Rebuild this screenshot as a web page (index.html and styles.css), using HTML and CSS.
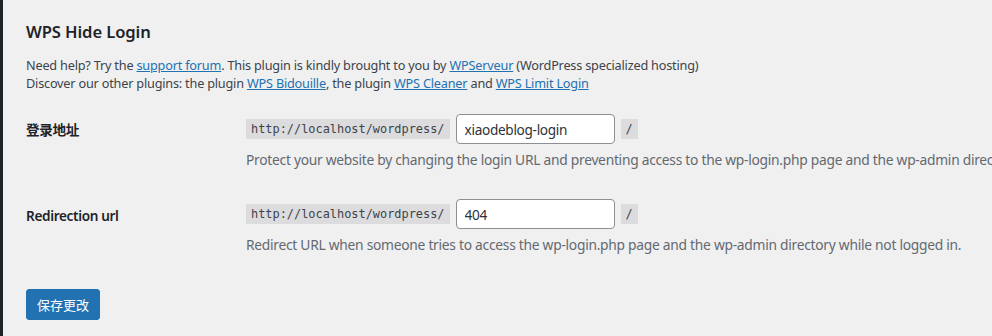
FILE: index.html
```html
<!DOCTYPE html>
<html lang="zh-CN">
<head>
<meta charset="utf-8">
<title>WPS Hide Login</title>
<link rel="stylesheet" href="styles.css">
</head>
<body>
<div class="sidebar"></div>
<main class="content">
  <h2 class="title">WPS Hide Login</h2>
  <p class="intro">Need help? Try the <a href="#">support forum</a>. This plugin is kindly brought to you by <a href="#">WPServeur</a> (WordPress specialized hosting)<br>Discover our other plugins: the plugin <a href="#">WPS Bidouille</a>, the plugin <a href="#">WPS Cleaner</a> and <a href="#">WPS Limit Login</a></p>
  <div class="form-table">
    <div class="row">
      <div class="label">登录地址</div>
      <div class="field">
        <div class="line">
          <code class="code">http://localhost/wordpress/</code>
          <input class="text" type="text" value="xiaodeblog-login">
          <code class="code">/</code>
        </div>
        <p class="desc">Protect your website by changing the login URL and preventing access to the wp-login.php page and the wp-admin directory to non-connected people.</p>
      </div>
    </div>
    <div class="row">
      <div class="label">Redirection url</div>
      <div class="field">
        <div class="line">
          <code class="code">http://localhost/wordpress/</code>
          <input class="text" type="text" value="404">
          <code class="code">/</code>
        </div>
        <p class="desc">Redirect URL when someone tries to access the wp-login.php page and the wp-admin directory while not logged in.</p>
      </div>
    </div>
  </div>
  <button class="button" type="button">保存更改</button>
</main>
</body>
</html>
```
FILE: styles.css
```css
html, body {
  margin: 0;
  height: 100%;
  overflow: hidden;
}
body {
  display: flex;
  background: #f0f0f1;
  color: #3c434a;
  font-family: "Noto Sans", "Noto Sans CJK SC", sans-serif;
  font-size: 12.7px;
  letter-spacing: -0.2px;
}
.sidebar {
  flex: none;
  width: 3px;
  background: #1d2327;
}
.content {
  flex: 1;
  min-width: 0;
  padding: 21px 0 0 23px;
  white-space: nowrap;
}
.title {
  margin: 0;
  font-size: 16.6px;
  line-height: 22px;
  font-weight: 600;
  color: #1d2327;
  letter-spacing: -0.1px;
}
.intro {
  margin: 13px 0 7px;
  line-height: 18px;
}
a {
  color: #2271b1;
  text-decoration: underline;
}
.row {
  display: flex;
}
.row + .row .label {
  padding-top: 23px;
}
.label {
  flex: none;
  width: 200px;
  padding: 22px 10px 0 0;
  font-size: 13.6px;
  line-height: 18px;
  font-weight: 600;
  color: #1d2327;
  letter-spacing: -0.35px;
}
.field {
  padding: 15px 10px 15px 10px;
}
.line {
  display: flex;
  align-items: center;
  gap: 6px;
}
.code {
  background: #dcdcde;
  color: #3c434a;
  padding: 3px 5px 2px;
  font-family: "DejaVu Sans Mono", monospace;
  font-size: 11.92px;
  line-height: 15px;
  letter-spacing: 0;
}
.text {
  box-sizing: border-box;
  width: 159px;
  height: 30px;
  margin: 0;
  padding: 0 8px;
  border: 1px solid #8c8f94;
  border-radius: 4px;
  background: #fff;
  color: #2c3338;
  font-family: "Noto Sans", sans-serif;
  font-size: 13.6px;
  letter-spacing: -0.3px;
  outline: none;
}
.desc {
  margin: 6px 0 0;
  color: #646970;
  font-size: 13.8px;
  letter-spacing: -0.27px;
  line-height: 19px;
}
.button {
  margin-top: 20px;
  height: 31px;
  padding: 0 10px;
  border: 1px solid #2271b1;
  border-radius: 3px;
  background: #2271b1;
  color: #fff;
  font-family: "Noto Sans CJK SC", sans-serif;
  font-size: 13px;
  line-height: 29px;
  letter-spacing: 0;
  cursor: pointer;
}
```
